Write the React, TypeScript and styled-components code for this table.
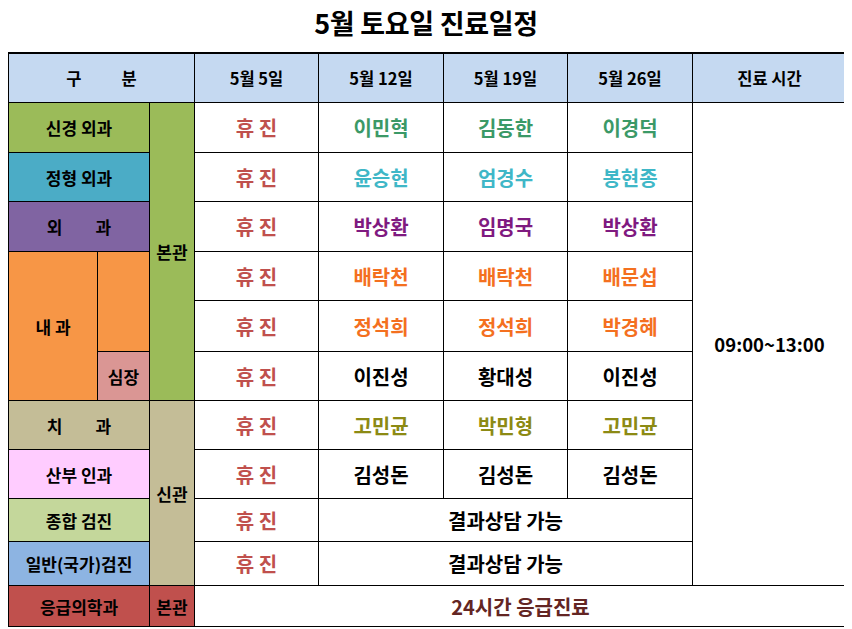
import styled, { createGlobalStyle } from "styled-components";

const GlobalStyle = createGlobalStyle`
  body {
    margin: 8px;
    background: #ffffff;
    font-family: "Noto Sans CJK KR", "Noto Sans", sans-serif;
    color: #000000;
  }
`;

const Title = styled.h1`
  margin: 0 0 13px;
  height: 32px;
  line-height: 30px;
  text-align: center;
  font-size: 27px;
  font-weight: 700;
  letter-spacing: -0.3px;
`;

const Schedule = styled.div`
  display: grid;
  width: max-content;
  grid-template-columns: 89px 52px 45px 124px 125px 124px 125px 154px;
  grid-template-rows: 49px 50px 49px 50px 49px 51px 49px 49px 49px 43px 44px 41px;
  border-top: 1px solid #000;
  border-left: 1px solid #000;
  outline: 1px solid #000;
`;

type CellProps = {
  $col: number;
  $row: number;
  $colSpan?: number;
  $rowSpan?: number;
  $bg?: string;
  $color?: string;
};

const Cell = styled.div<CellProps>`
  grid-column: ${(p) => p.$col} / span ${(p) => p.$colSpan ?? 1};
  grid-row: ${(p) => p.$row} / span ${(p) => p.$rowSpan ?? 1};
  box-sizing: border-box;
  border-right: 1px solid #000;
  border-bottom: 1px solid #000;
  background: ${(p) => p.$bg ?? "#ffffff"};
  color: ${(p) => p.$color ?? "#000000"};
  display: flex;
  align-items: center;
  justify-content: center;
  font-weight: 700;
  white-space: pre;
`;

const HeaderCell = styled(Cell)`
  background: #c5d9f1;
  font-size: 16.5px;
`;

const DeptCell = styled(Cell)`
  font-size: 17px;
`;

const BuildingCell = styled(Cell)`
  font-size: 17px;
`;

const DoctorCell = styled(Cell)`
  font-size: 20px;
`;

const ClosedCell = styled(DoctorCell)`
  color: #c0504d;
`;

const TimeCell = styled(Cell)`
  font-size: 18.5px;
`;

const Spaced = styled.span<{ $gap: number }>`
  display: flex;
  gap: ${(p) => p.$gap}px;
`;

type Dept = {
  label: string;
  bg: string;
  color: string;
  names?: string[];
  gap?: number;
};

const depts: Dept[] = [
  { label: "신경 외과", bg: "#9bbb59", color: "#3b9967", names: ["이민혁", "김동한", "이경덕"] },
  { label: "정형 외과", bg: "#4bacc6", color: "#3fb7c7", names: ["윤승현", "엄경수", "봉현종"] },
  { label: "외과", gap: 33, bg: "#8064a2", color: "#7f1a80", names: ["박상환", "임명국", "박상환"] },
  { label: "", bg: "#f79646", color: "#f4701f", names: ["배락천", "배락천", "배문섭"] },
  { label: "", bg: "#f79646", color: "#f4701f", names: ["정석희", "정석희", "박경혜"] },
  { label: "", bg: "#f79646", color: "#000000", names: ["이진성", "황대성", "이진성"] },
  { label: "치과", gap: 33, bg: "#c4bd97", color: "#8c8a14", names: ["고민균", "박민형", "고민균"] },
  { label: "산부 인과", bg: "#ffccff", color: "#000000", names: ["김성돈", "김성돈", "김성돈"] },
  { label: "종합 검진", bg: "#c4d79b", color: "#000000" },
  { label: "일반(국가)검진", bg: "#8db4e2", color: "#000000" },
];

const dates = ["5월 5일", "5월 12일", "5월 19일", "5월 26일"];

function SpacedText({ text, gap }: { text: string; gap: number }) {
  return (
    <Spaced $gap={gap}>
      {text.split("").map((ch, i) => (
        <span key={i}>{ch}</span>
      ))}
    </Spaced>
  );
}

export default function App() {
  return (
    <>
      <GlobalStyle />
      <Title>5월 토요일 진료일정</Title>
      <Schedule>
        <HeaderCell $col={1} $row={1} $colSpan={3}>
          <SpacedText text="구분" gap={40} />
        </HeaderCell>
        {dates.map((d, i) => (
          <HeaderCell key={d} $col={4 + i} $row={1}>
            {d}
          </HeaderCell>
        ))}
        <HeaderCell $col={8} $row={1}>
          진료 시간
        </HeaderCell>

        {/* 진료과 */}
        {depts.map((dept, i) => {
          const row = i + 2;
          if (i >= 3 && i <= 5) return null;
          return (
            <DeptCell key={row} $col={1} $row={row} $colSpan={2} $bg={dept.bg}>
              {dept.gap ? <SpacedText text={dept.label} gap={dept.gap} /> : dept.label}
            </DeptCell>
          );
        })}
        <DeptCell $col={1} $row={5} $rowSpan={3} $bg="#f79646">
          내 과
        </DeptCell>
        <DeptCell $col={2} $row={5} $rowSpan={2} $bg="#f79646" />
        <DeptCell $col={2} $row={7} $bg="#da9694">
          심장
        </DeptCell>

        <BuildingCell $col={3} $row={2} $rowSpan={6} $bg="#9bbb59">
          본관
        </BuildingCell>
        <BuildingCell $col={3} $row={8} $rowSpan={4} $bg="#c4bd97">
          신관
        </BuildingCell>

        {/* 일정 */}
        {depts.map((dept, i) => {
          const row = i + 2;
          return [
            <ClosedCell key={`c${row}`} $col={4} $row={row}>
              휴 진
            </ClosedCell>,
            dept.names ? (
              dept.names.map((n, j) => (
                <DoctorCell key={`n${row}-${j}`} $col={5 + j} $row={row} $color={dept.color}>
                  {n}
                </DoctorCell>
              ))
            ) : (
              <DoctorCell key={`r${row}`} $col={5} $row={row} $colSpan={3}>
                결과상담 가능
              </DoctorCell>
            ),
          ];
        })}

        <TimeCell $col={8} $row={2} $rowSpan={10}>
          09:00~13:00
        </TimeCell>

        <DeptCell $col={1} $row={12} $colSpan={2} $bg="#c0504d">
          응급의학과
        </DeptCell>
        <BuildingCell $col={3} $row={12} $bg="#c0504d">
          본관
        </BuildingCell>
        <DoctorCell $col={4} $row={12} $colSpan={5} $color="#632523">
          24시간 응급진료
        </DoctorCell>
      </Schedule>
    </>
  );
}
